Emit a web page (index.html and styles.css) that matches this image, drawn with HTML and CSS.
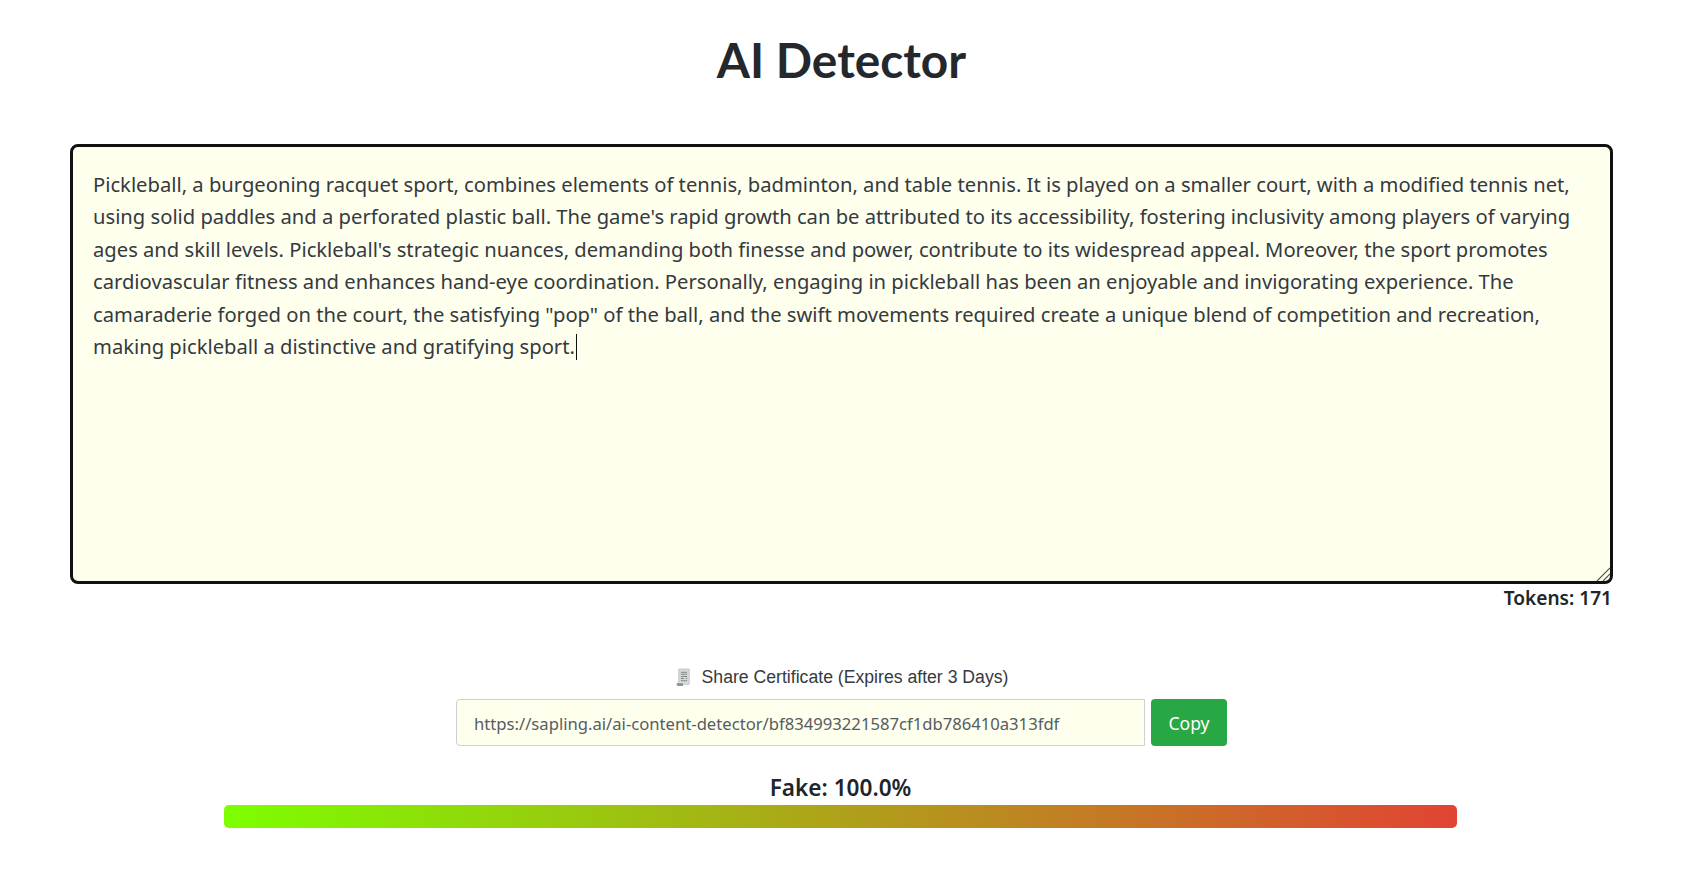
FILE: index.html
```html
<!DOCTYPE html>
<html lang="en">
<head>
<meta charset="utf-8">
<title>AI Detector</title>
<link rel="stylesheet" href="styles.css">
</head>
<body>
<main class="page">
  <h1 class="title">AI Detector</h1>
  <section class="editor-wrap">
    <div class="editor-box">
      <div class="editor" role="textbox">Pickleball, a burgeoning racquet sport, combines elements of tennis, badminton, and table tennis. It is played on a smaller court, with a modified tennis net, using solid paddles and a perforated plastic ball. The game's rapid growth can be attributed to its accessibility, fostering inclusivity among players of varying ages and skill levels. Pickleball's strategic nuances, demanding both finesse and power, contribute to its widespread appeal. Moreover, the sport promotes cardiovascular fitness and enhances hand-eye coordination. Personally, engaging in pickleball has been an enjoyable and invigorating experience. The camaraderie forged on the court, the satisfying "pop" of the ball, and the swift movements required create a unique blend of competition and recreation, making pickleball a distinctive and gratifying sport.<span class="caret"></span></div>
      <svg class="grip" width="14" height="14" viewBox="0 0 14 14" aria-hidden="true">
        <path d="M1 14 14 1M7 14l7-7" stroke="#555" stroke-width="1.200" fill="none"/>
      </svg>
    </div>
    <div class="tokens">Tokens: 171</div>
  </section>
  <section class="share">
    <div class="share-label">
      <svg class="receipt" width="18" height="19" viewBox="0 0 16 18" aria-hidden="true">
        <path d="M3 1h10v14l-1.500 1-1.500-1-1.500 1-1.500-1-1.500 1L4 15H3z" fill="#d9dcdc" stroke="#a9adad" stroke-width=".6"/>
        <path d="M5 4h6M5 6h6M5 8h6M5 10h3M9.500 10H11M5 12h6" stroke="#7f8585" stroke-width="1"/>
        <path d="M1 14.500h6V17H2.500Q1 17 1 15.500z" fill="#8d9391"/>
      </svg>
      <span>Share Certificate (Expires after 3 Days)</span>
    </div>
    <div class="share-row">
      <input class="share-url" type="text" readonly value="https://sapling.ai/ai-content-detector/bf834993221587cf1db786410a313fdf">
      <button class="copy" type="button">Copy</button>
    </div>
  </section>
  <section class="result">
    <div class="result-label">Fake: 100.0%</div>
    <div class="meter"></div>
  </section>
</main>
</body>
</html>
```
FILE: styles.css
```css
* { box-sizing: border-box; }
html, body { margin: 0; background: #fff; }
body { color: #212529; font-family: "Noto Sans", "Open Sans", sans-serif; overflow: hidden; }
.page { width: 1683px; height: 870px; display: flex; flex-direction: column; align-items: center; }
.title { margin: 31px 0 0; font-family: Lato, sans-serif; font-weight: 700; font-size: 47.8px; line-height: 58px; color: #24282d; }
.editor-wrap { width: 1543px; margin: 55px 0 0; }
.editor-box { position: relative; }
.editor {
  height: 440px; padding: 21px 20px 0; border: 3px solid #111; border-radius: 8px; background: #ffffee;
  font-size: 20.2px; line-height: 32.4px; color: #343a40; overflow: hidden;
}
.grip { position: absolute; right: 3px; bottom: 3px; }
.caret { display: inline-block; width: 1px; height: 26px; margin-left: 1px; background: #111; vertical-align: -6px; }
.tokens { margin-top: 1px; font-size: 19.1px; line-height: 26px; font-weight: 600; text-align: right; padding-right: 1px; }
.share { margin-top: 53px; display: flex; flex-direction: column; align-items: center; }
.share-label { display: flex; align-items: center; gap: 9px; height: 26px; font-family: "Liberation Sans", sans-serif; font-size: 17.65px; color: #343a40; }
.share-row { display: flex; gap: 6px; margin-top: 9px; }
.share-url { width: 689px; height: 47px; padding: 2px 17px 0; border: 1px solid #ccd0d4; border-radius: 4px 0 0 4px; background: #ffffee; font: 16.65px "Noto Sans", sans-serif; color: #565c62; outline: 0; }
.copy { width: 76px; height: 47px; padding: 0; border: 0; border-radius: 4px; background: #28a745; color: #fff; font: 17.6px "Noto Sans", sans-serif; }
.result { width: 1233px; margin: 27px 2px 0 0; display: flex; flex-direction: column; align-items: center; }
.result-label { font-size: 22.6px; line-height: 30px; font-weight: 600; }
.meter { width: 100%; height: 23px; border-radius: 5px; background: linear-gradient(90deg, #7cff00 0%, #e14433 100%); margin-top: 2px; }
```
